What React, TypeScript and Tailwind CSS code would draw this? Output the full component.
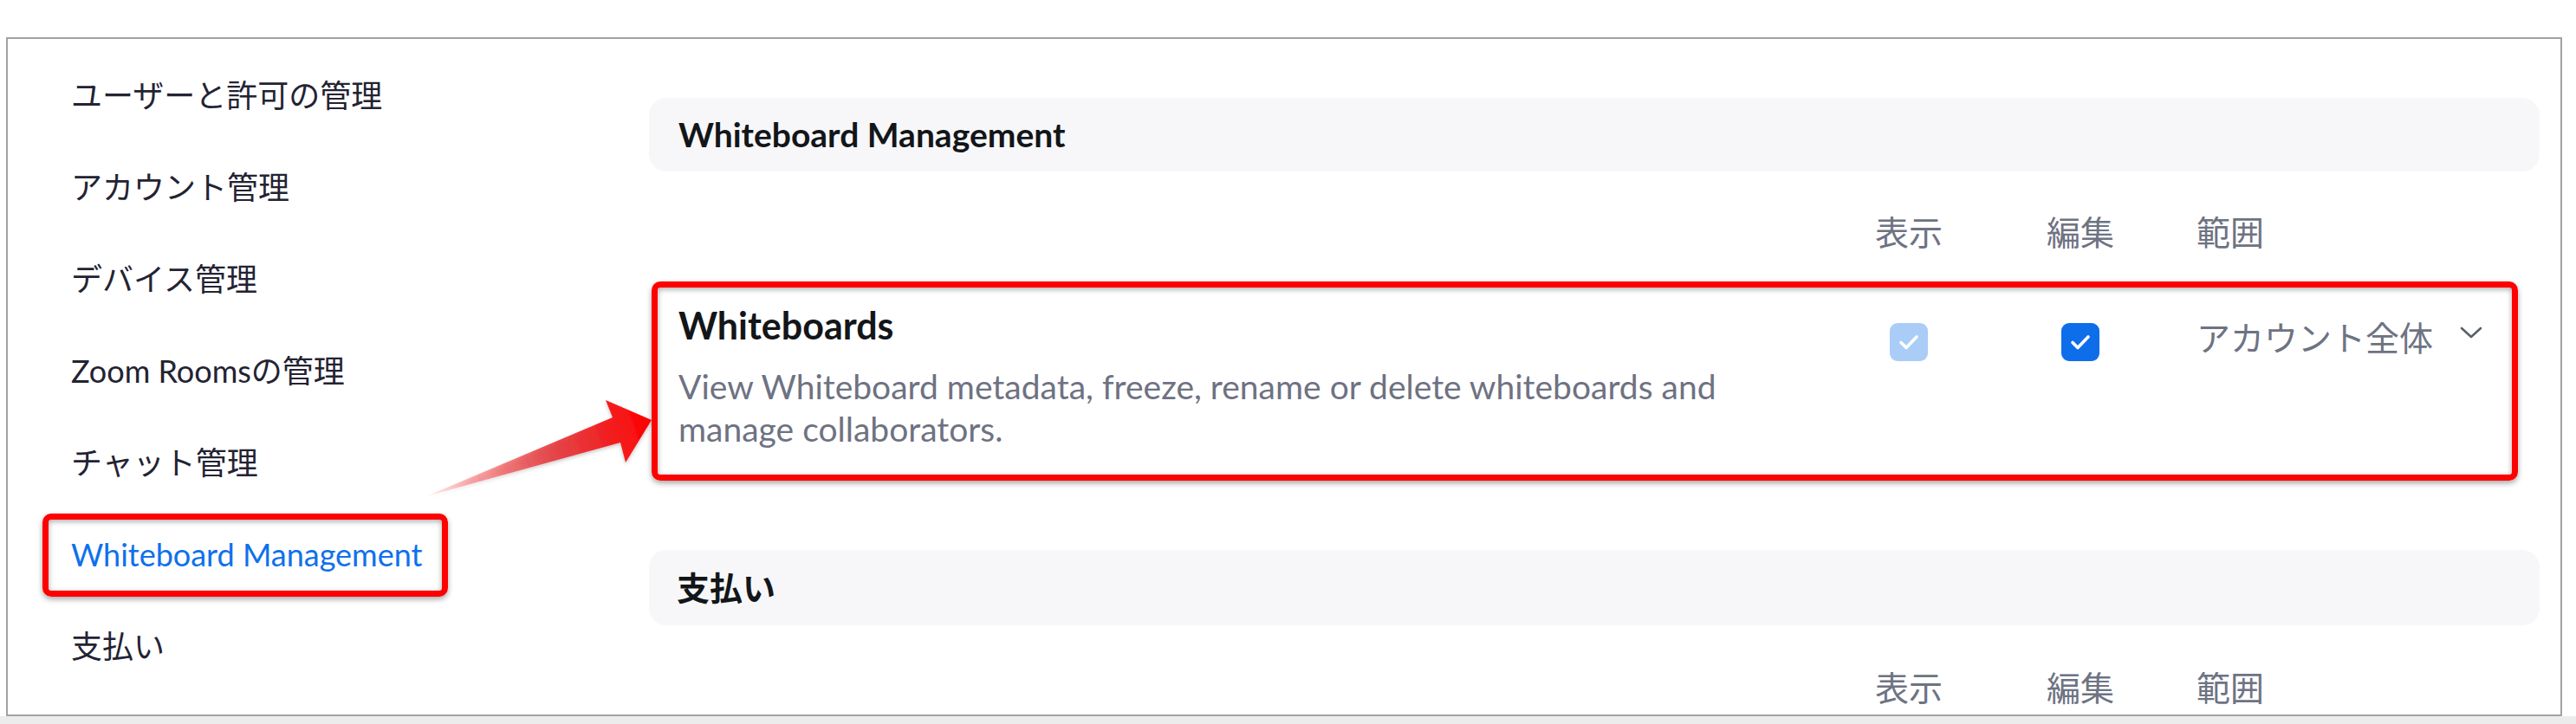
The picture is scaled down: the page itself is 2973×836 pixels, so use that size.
import React from "react";

const sideItems = [
  "ユーザーと許可の管理",
  "アカウント管理",
  "デバイス管理",
  "Zoom Roomsの管理",
  "チャット管理",
  "Whiteboard Management",
  "支払い",
];

function Checkbox({ disabled }: { disabled?: boolean }) {
  return (
    <div
      className={
        disabled
          ? "w-[44px] h-[44px] rounded-[9px] bg-[#a9cdf7] flex items-center justify-center"
          : "w-[44px] h-[44px] rounded-[9px] bg-[#0e6eea] flex items-center justify-center"
      }
    >
      <svg width="26" height="22" viewBox="0 0 26 22" fill="none">
        <path d="M4 11.5l6 6L22 5" stroke="white" strokeWidth="3.6" strokeLinecap="round" strokeLinejoin="round" />
      </svg>
    </div>
  );
}

function ColumnHeads() {
  return (
    <div className="flex h-[44px] items-center text-[39px] leading-[44px] text-[#6e7383]">
      <div className="flex-1" />
      <div className="w-[198px] text-center">表示</div>
      <div className="w-[198px] text-center">編集</div>
      <div className="w-[431px] pl-[35px]">範囲</div>
    </div>
  );
}

export default function App() {
  return (
    <div className="relative w-[2973px] h-[836px] bg-white overflow-hidden font-[Lato,'Noto_Sans_CJK_JP',sans-serif]">
      <div className="pt-[43px] pl-[7px]">
        <div className="w-[2950px] h-[784px] border-2 border-[#a2a2a2] flex overflow-hidden">
          {/* sidebar */}
          <div className="w-[740px] shrink-0 pl-[73px] pt-[12px]">
            {sideItems.map((t) => {
              const active = t === "Whiteboard Management";
              return (
                <div key={t} className="relative h-[106px] flex items-center">
                  <span className={active ? "text-[36px] text-[#0e71eb]" : "text-[36px] text-[#232333]"}>{t}</span>
                  {active && (
                    <div className="absolute left-[-33px] top-[6px] w-[468px] h-[96px] border-[7px] border-[#ff0000] rounded-[10px] shadow-[0_3px_6px_rgba(0,0,0,0.35),inset_0_2px_6px_rgba(0,0,0,0.35)]" />
                  )}
                </div>
              );
            })}
          </div>

          {/* main */}
          <div className="flex-1 pr-[24px] pt-[68px]">
            <div className="h-[85px] rounded-[20px] bg-[#f7f7f9] px-[34px] flex items-center">
              <span className="text-[39px] font-bold text-[#131619]">Whiteboard Management</span>
            </div>

            <div className="mt-[48px]">
              <ColumnHeads />
            </div>

            <div className="relative mt-[62px] flex items-start">
              <div className="flex-1 pl-[34px]">
                <div className="text-[43px] leading-[48px] font-bold text-[#131619]">Whiteboards</div>
                <div className="mt-[22px] text-[39px] leading-[49px] text-[#6e7282]">
                  View Whiteboard metadata, freeze, rename or delete whiteboards and
                  <br />
                  manage collaborators.
                </div>
              </div>
              <div className="w-[198px] flex justify-center pt-[21px]">
                <Checkbox disabled />
              </div>
              <div className="w-[198px] flex justify-center pt-[21px]">
                <Checkbox />
              </div>
              <div className="w-[431px] pl-[35px] pt-[14px] flex items-center">
                <span className="text-[39px] leading-[48px] text-[#6e7383]">アカウント全体</span>
                <svg className="ml-[30px] mt-[-12px]" width="28" height="16" viewBox="0 0 28 16" fill="none">
                  <path d="M3 3l11 10L25 3" stroke="#5b5f6b" strokeWidth="2.6" strokeLinecap="round" strokeLinejoin="round" />
                </svg>
              </div>
              <div className="absolute left-[3px] top-[-27px] w-[2154px] h-[230px] border-[7px] border-[#ff0000] rounded-[10px] shadow-[0_3px_6px_rgba(0,0,0,0.35),inset_0_2px_6px_rgba(0,0,0,0.35)]" />
            </div>

            <div className="mt-[115px] h-[87px] rounded-[20px] bg-[#f7f7f9] px-[32px] flex items-center">
              <span className="text-[38px] font-bold text-[#131619]">支払い</span>
            </div>

            <div className="mt-[50px]">
              <ColumnHeads />
            </div>
          </div>
        </div>
        <div className="h-[9px] bg-[#ececec] ml-[-7px]" />
      </div>

      {/* annotation arrow */}
      <svg className="absolute inset-0 pointer-events-none" width="2973" height="836" viewBox="0 0 2973 836">
        <defs>
          <linearGradient id="arrowGrad" x1="492" y1="573" x2="752" y2="485" gradientUnits="userSpaceOnUse">
            <stop offset="0" stopColor="#ff0000" stopOpacity="0.05" />
            <stop offset="0.55" stopColor="#e2262a" stopOpacity="0.8" />
            <stop offset="1" stopColor="#ff0000" />
          </linearGradient>
          <filter id="arrowShadow" x="-10%" y="-20%" width="120%" height="140%">
            <feDropShadow dx="0" dy="2" stdDeviation="2" floodColor="#000" floodOpacity="0.25" />
          </filter>
        </defs>
        <polygon
          points="492,573 707,482 699,462 752,485 722,534 716,511"
          fill="url(#arrowGrad)"
          filter="url(#arrowShadow)"
        />
      </svg>
    </div>
  );
}
